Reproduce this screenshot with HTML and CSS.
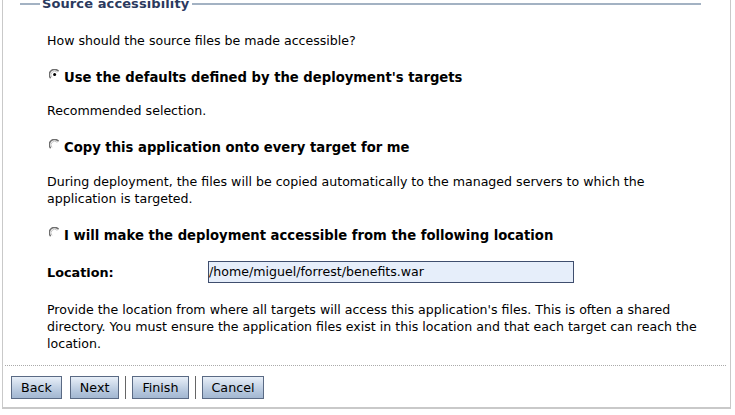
FILE: index.html
```html
<!DOCTYPE html>
<html>
<head>
<meta charset="utf-8">
<link rel="stylesheet" href="styles.css">
</head>
<body>
<div class="frame">
  <div class="legend-row">
    <span class="legend-line short"></span>
    <span class="legend-text">Source accessibility</span>
    <span class="legend-line long"></span>
  </div>
  <div class="content">
    <p class="question">How should the source files be made accessible?</p>

    <div class="option first">
      <svg class="radio" width="11" height="11" viewBox="0 0 11 11"><path d="M1.6 9.2 A4.6 4.6 0 0 1 9.6 2.2" fill="none" stroke="#6e6e6e" stroke-width="1.5"/><path d="M3 8.4 A3.3 3.3 0 0 1 8.3 3.4" fill="none" stroke="#bdbdbd" stroke-width="0.9"/><circle cx="5.6" cy="5.6" r="1.5" fill="#000"/></svg>
      <span class="option-label">Use the defaults defined by the deployment's targets</span>
    </div>
    <p class="desc short-gap">Recommended selection.</p>

    <div class="option">
      <svg class="radio" width="11" height="11" viewBox="0 0 11 11"><path d="M1.6 9.2 A4.6 4.6 0 0 1 9.6 2.2" fill="none" stroke="#6e6e6e" stroke-width="1.5"/><path d="M3 8.4 A3.3 3.3 0 0 1 8.3 3.4" fill="none" stroke="#bdbdbd" stroke-width="0.9"/></svg>
      <span class="option-label">Copy this application onto every target for me</span>
    </div>
    <p class="desc">During deployment, the files will be copied automatically to the managed servers to which the application is targeted.</p>

    <div class="option">
      <svg class="radio" width="11" height="11" viewBox="0 0 11 11"><path d="M1.6 9.2 A4.6 4.6 0 0 1 9.6 2.2" fill="none" stroke="#6e6e6e" stroke-width="1.5"/><path d="M3 8.4 A3.3 3.3 0 0 1 8.3 3.4" fill="none" stroke="#bdbdbd" stroke-width="0.9"/></svg>
      <span class="option-label">I will make the deployment accessible from the following location</span>
    </div>

    <div class="location-row">
      <label class="location-label">Location:</label>
      <div class="location-input">/home/miguel/forrest/benefits.war</div>
    </div>

    <p class="desc note">Provide the location from where all targets will access this application's files. This is often a shared directory. You must ensure the application files exist in this location and that each target can reach the location.</p>
  </div>
  <div class="divider"></div>
  <div class="buttons">
    <button class="btn">Back</button>
    <button class="btn">Next</button>
    <span class="sep"></span>
    <button class="btn">Finish</button>
    <span class="sep"></span>
    <button class="btn">Cancel</button>
  </div>
</div>
</body>
</html>
```
FILE: styles.css
```css
html, body {
  margin: 0;
  padding: 0;
  background: #fff;
}
body {
  font-family: "DejaVu Sans", sans-serif;
  font-size: 12.6px;
  color: #000;
}
.frame {
  margin-left: 2px;
  width: 729px;
  height: 409px;
  border-left: 1px solid #c9c9c9;
  border-right: 1px solid #c9c9c9;
  border-bottom: 2px solid #c9c9c9;
  box-sizing: border-box;
  display: flex;
  flex-direction: column;
}
.legend-row {
  height: 8px;
  display: flex;
  align-items: center;
  padding-left: 17px;
}
.legend-line {
  height: 2px;
  background: #a3b2c3;
}
.legend-line.short {
  width: 20px;
}
.legend-line.long {
  width: 509px;
}
.legend-text {
  font-weight: bold;
  font-size: 13px;
  line-height: 14px;
  color: #2b3a5e;
  padding: 0 3px 0 2px;
  letter-spacing: 0.1px;
}
.content {
  padding-left: 44px;
  padding-right: 22px;
}
p {
  margin: 0;
  line-height: 17px;
}
.question {
  margin-top: 24px;
}
.option {
  display: flex;
  align-items: flex-start;
  margin-top: 20px;
  line-height: 17px;
}
.option + .location-row {
  margin-top: 17px;
}
.radio {
  margin-top: 0px;
  margin-left: 2px;
  margin-right: 4px;
  flex: none;
}
.option-label {
  font-weight: bold;
  font-size: 13.2px;
}
.desc {
  margin-top: 17px;
}
.desc.short-gap {
  margin-top: 16px;
}
.location-row {
  display: flex;
  align-items: center;
}
.location-label {
  font-weight: bold;
  font-size: 12.8px;
  width: 161px;
}
.location-input {
  width: 366px;
  height: 22px;
  box-sizing: border-box;
  border: 1px solid #3f4e6e;
  background: #e6eefa;
  line-height: 20px;
  padding-left: 0px;
}
.note {
  margin-top: 18px;
}
.divider {
  margin: 13px 4px 0 2px;
  border-top: 1px dotted #aaa;
}
.buttons {
  display: flex;
  align-items: stretch;
  margin-top: 10px;
  padding-left: 8px;
  height: 23px;
}
.btn {
  font-family: "DejaVu Sans", sans-serif;
  font-size: 12.7px;
  color: #000;
  padding: 0 9px;
  height: 23px;
  border: 1px solid #5a6a84;
  background: linear-gradient(#e8eff8, #b3c5dc 70%, #a3b7d1);
  margin-right: 8px;
  border-radius: 0;
}
.sep {
  width: 1px;
  background: #666;
  margin: 0 6px 0 -2px;
}
```
